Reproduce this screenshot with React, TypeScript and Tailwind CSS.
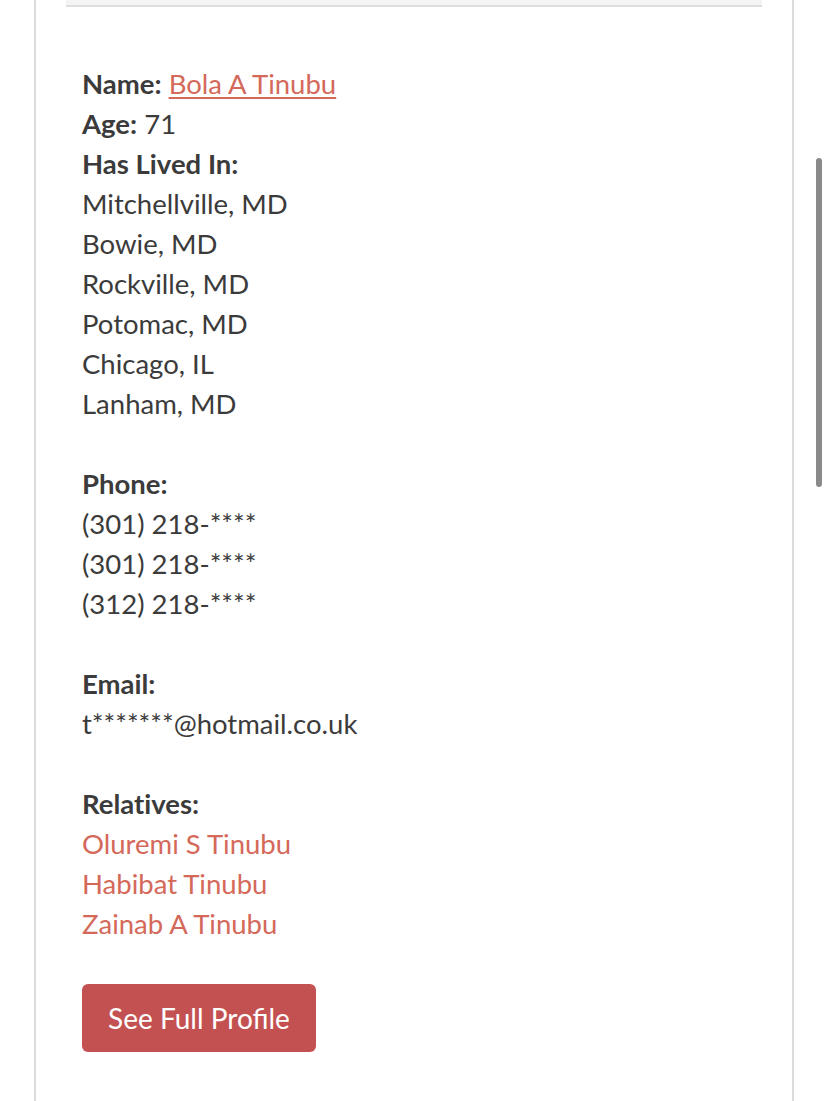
import React from 'react';

const places = ['Mitchellville, MD', 'Bowie, MD', 'Rockville, MD', 'Potomac, MD', 'Chicago, IL', 'Lanham, MD'];
const phones = ['(301) 218-****', '(301) 218-****', '(312) 218-****'];
const relatives = ['Oluremi S Tinubu', 'Habibat Tinubu', 'Zainab A Tinubu'];

const App: React.FC = () => {
  return (
    <div className="relative min-h-[1101px] bg-white font-['Lato','Liberation_Sans',sans-serif] text-[27.5px] leading-[40px] text-[#3b3b3b]">
      {/* card */}
      <div className="ml-[34px] w-[760px] min-h-[1101px] border-x-2 border-[#dcdcdc]">
        <div className="mx-[30px] h-[7px] bg-[#f4f4f4] border-b-2 border-[#dedede]" />

        <div className="pl-[46px] pt-[57px] [font-variant-ligatures:none]">
          <div>
            <b>Name:</b>{' '}
            <a href="#" className="text-[#d4695a] underline underline-offset-[3px] decoration-[2px]">Bola A Tinubu</a>
          </div>
          <div><b>Age:</b> 71</div>
          <div><b>Has Lived In:</b></div>
          {places.map((p, i) => <div key={i}>{p}</div>)}

          <div className="mt-[40px]"><b>Phone:</b></div>
          {phones.map((p, i) => <div key={i}>{p}</div>)}

          <div className="mt-[40px]"><b>Email:</b></div>
          <div>t*******@hotmail.co.uk</div>

          <div className="mt-[40px]"><b>Relatives:</b></div>
          {relatives.map((r, i) => (
            <div key={i}><a href="#" className="text-[#d4695a]">{r}</a></div>
          ))}

          <button className="mt-[40px] h-[68px] w-[234px] rounded-[6px] bg-[#c45152] text-white text-[28px] [font-variant-ligatures:normal]">
            See Full Profile
          </button>
        </div>
      </div>

      {/* scrollbar */}
      <div className="absolute left-[816px] top-[158px] h-[329px] w-[6px] rounded-full bg-[#8a8a8a]" />
    </div>
  );
};

export default App;
